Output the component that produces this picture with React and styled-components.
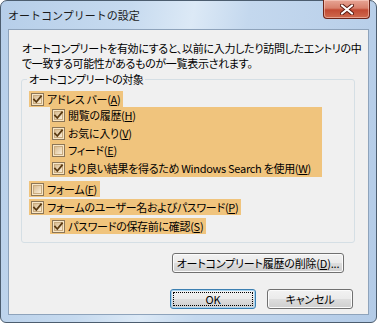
import styled, { createGlobalStyle } from 'styled-components'

const GlobalStyle = createGlobalStyle`
  html, body {
    margin: 0;
    padding: 0;
    background: #ffffff;
  }
  body {
    font-family: "Noto Sans CJK JP", "Noto Sans", sans-serif;
    font-size: 11px;
    color: #000;
  }
`

const Window = styled.div`
  box-sizing: border-box;
  width: 377px;
  height: 323px;
  display: flex;
  flex-direction: column;
  padding: 0 7px 7px 7px;
  border: 1px solid #4c5d6f;
  border-radius: 7px 7px 6px 6px;
  background: linear-gradient(
    100deg,
    #b6cee9 0%,
    #c6daef 30%,
    #dce9f6 45%,
    #c4d8ee 58%,
    #b3cbe7 100%
  );
`

const TitleBar = styled.div`
  height: 28px;
  display: flex;
  justify-content: space-between;
  align-items: flex-start;
`

const Title = styled.span`
  margin-top: 5px;
  line-height: 18px;
  font-size: 11px;
  color: #1a1a1a;
  white-space: nowrap;
`

const CloseButton = styled.div`
  box-sizing: border-box;
  width: 47px;
  height: 19px;
  margin-top: -1px;
  margin-right: -1px;
  display: flex;
  align-items: center;
  justify-content: center;
  border: 1px solid #6e2418;
  border-top: none;
  border-radius: 0 0 4px 4px;
  background: linear-gradient(#e7a595 0%, #d8806c 45%, #c24a33 55%, #cf6a4f 100%);
  box-shadow: inset 0 0 0 1px rgba(255, 220, 210, 0.5);
`

const Client = styled.div`
  flex: 1;
  display: flex;
  flex-direction: column;
  padding: 11px 13px 0 12px;
  background: #f0f0f0;
  border: 1px solid #8ea3bb;
`

const Intro = styled.p`
  margin: 0 0 0 1px;
  line-height: 15px;
  letter-spacing: -0.3px;
  font-feature-settings: "palt";
  white-space: nowrap;
`

const Group = styled.fieldset`
  margin: 1px 0 0 0;
  padding: 0 7px 8px 7px;
  border: 1px solid #d5dfe5;
  border-radius: 3px;
  display: flex;
  flex-direction: column;
  align-items: flex-start;
`

const Legend = styled.legend`
  padding: 0 2px;
  margin-left: -2px;
  line-height: 15px;
  letter-spacing: -0.5px;
  font-feature-settings: "palt";
`

const Row = styled.div`
  height: ${(p) => p.$h || 16}px;
  margin-top: ${(p) => p.$mt || 0}px;
  margin-left: ${(p) => p.$indent || 0}px;
  display: inline-flex;
  align-items: center;
  gap: 3px;
  padding: 0 3px 0 2px;
  background: ${(p) => (p.$hl ? '#f0c47d' : 'transparent')};
  white-space: nowrap;

  & svg {
    flex-shrink: 0;
  }
`

const Label = styled.span`
  line-height: 15px;
  letter-spacing: -0.3px;
  font-feature-settings: "palt";
`

const SubBlock = styled.div`
  margin-left: 21px;
  width: 272px;
  display: flex;
  flex-direction: column;
  background: #f0c47d;
`

const ButtonRow = styled.div`
  display: flex;
  justify-content: flex-end;
  gap: 11px;
  margin-top: ${(p) => p.$mt}px;
  margin-right: ${(p) => p.$mr}px;
`

const Button = styled.div`
  position: relative;
  box-sizing: border-box;
  width: ${(p) => p.$w}px;
  height: 20px;
  display: flex;
  align-items: center;
  justify-content: center;
  border: 1px solid ${(p) => (p.$default ? '#3c7fb1' : '#707070')};
  border-radius: 3px;
  background: linear-gradient(#f2f2f2 0%, #ebebeb 48%, #dddddd 52%, #cfcfcf 100%);
  box-shadow: inset 0 0 0 1px ${(p) => (p.$default ? '#a9d6f3' : '#fbfbfb')};
  font-feature-settings: "palt";
  letter-spacing: -0.2px;
  line-height: 15px;
  white-space: nowrap;
`

const Focus = styled.span`
  position: absolute;
  inset: 2px;
  border: 1px dotted #000;
  border-radius: 1px;
  pointer-events: none;
`

const Checkbox = ({ checked }) => (
  <svg width="13" height="13" viewBox="0 0 13 13">
    <defs>
      <linearGradient id="cbFill" x1="0" y1="0" x2="1" y2="1">
        <stop offset="0" stopColor="#d7b98c" />
        <stop offset="1" stopColor="#fbf0dc" />
      </linearGradient>
    </defs>
    <rect x="0.5" y="0.5" width="12" height="12" fill="#f8e6c6" stroke="#8c7657" />
    <rect x="2.5" y="2.5" width="8" height="8" fill="url(#cbFill)" stroke="#c9ab7f" />
    {checked && (
      <path
        d="M3 6.5 L5.3 9 L10 3.3"
        fill="none"
        stroke="#5a3a12"
        strokeWidth="1.8"
        strokeLinecap="square"
      />
    )}
  </svg>
)

const Option = ({ checked, text, accel, ...rest }) => (
  <Row {...rest}>
    <Checkbox checked={checked} />
    <Label>
      {text}(<u>{accel}</u>)
    </Label>
  </Row>
)

const App = () => (
  <>
    <GlobalStyle />
    <Window>
      <TitleBar>
        <Title>オートコンプリートの設定</Title>
        <CloseButton>
          <svg width="14" height="11" viewBox="0 0 14 11">
            <path
              d="M2 1.5 L12 9.5 M12 1.5 L2 9.5"
              stroke="#5a1a10"
              strokeWidth="4"
              strokeLinecap="round"
            />
            <path
              d="M2 1.5 L12 9.5 M12 1.5 L2 9.5"
              stroke="#ffffff"
              strokeWidth="2.2"
              strokeLinecap="round"
            />
          </svg>
        </CloseButton>
      </TitleBar>
      <Client>
        <Intro>
          オートコンプリートを有効にすると、以前に入力したり訪問したエントリの中
          <br />
          で一致する可能性があるものが一覧表示されます。
        </Intro>
        <Group>
          <Legend>オートコンプリートの対象</Legend>
          <Option $hl $mt={4} checked text="アドレス バー" accel="A" />
          <SubBlock>
            <Option $h={17.5} checked text="閲覧の履歴" accel="H" />
            <Option $h={17.5} checked text="お気に入り" accel="V" />
            <Option $h={17.5} text="フィード" accel="E" />
            <Option
              $h={17.5}
              checked
              text="より良い結果を得るため Windows Search を使用"
              accel="W"
            />
          </SubBlock>
          <Option $hl $mt={4} text="フォーム" accel="F" />
          <Option $hl $mt={2} checked text="フォームのユーザー名およびパスワード" accel="P" />
          <Option $hl $mt={3} $indent={21} checked text="パスワードの保存前に確認" accel="S" />
        </Group>
        <ButtonRow $mt={10} $mr={11}>
          <Button $w={172}>
            オートコンプリート履歴の削除(<u>D</u>)...
          </Button>
        </ButtonRow>
        <ButtonRow $mt={16} $mr={2}>
          <Button $w={86} $default>
            <Focus />
            OK
          </Button>
          <Button $w={86}>キャンセル</Button>
        </ButtonRow>
      </Client>
    </Window>
  </>
)

export default App
